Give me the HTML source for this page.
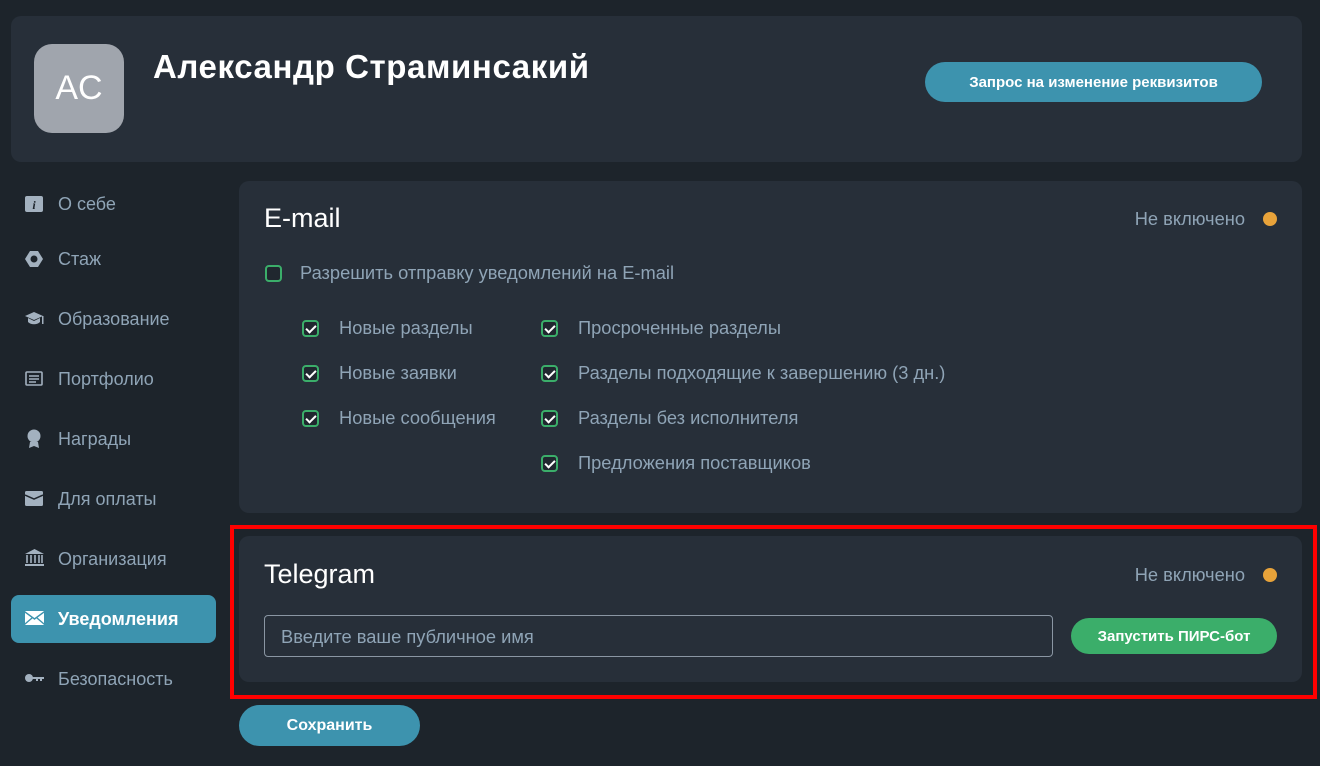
<!DOCTYPE html>
<html><head><meta charset="utf-8"><style>
*{box-sizing:border-box;margin:0;padding:0}
body{width:1320px;height:766px;background:#1d242b;font-family:"Liberation Sans",sans-serif;position:relative;overflow:hidden;color:#8fa4b6}
.abs{position:absolute}
.card{position:absolute;background:#272f39;border-radius:10px}
.btn{position:absolute;border-radius:21px;color:#fff;font-weight:bold;font-size:15px;display:flex;align-items:center;justify-content:center}
.nav{position:absolute;left:58px;font-size:18px;color:#8fa4b6;line-height:20px}
.ic{position:absolute;left:25px}
.cb{position:absolute;width:17px;height:17px;border:2px solid #3bae6a;border-radius:4px;background:#20272f}
.cb.on::after{content:"";position:absolute;left:4px;top:1px;width:4px;height:8px;border:solid #fff;border-width:0 2px 2px 0;transform:rotate(45deg)}
.lbl{position:absolute;font-size:18.3px;line-height:20px;color:#8fa4b6}
.dot{position:absolute;width:14px;height:14px;border-radius:50%;background:#e8a33a}
</style></head><body>
<div class="card" style="left:11px;top:16px;width:1291px;height:146px"></div>
<div class="abs" style="left:34px;top:44px;width:90px;height:89px;border-radius:18px;background:#a0a5ad;color:#fff;font-size:34px;display:flex;align-items:center;justify-content:center;font-weight:300">AC</div>
<div class="abs" style="left:153px;top:48px;font-size:33px;font-weight:bold;color:#fff;letter-spacing:0.6px">Александр Страминсакий</div>
<div class="btn" style="left:925px;top:62px;width:337px;height:40px;background:#3d93ae">Запрос на изменение реквизитов</div>

<div class="abs" style="left:11px;top:595px;width:205px;height:48px;border-radius:8px;background:#3d93ae"></div>
<svg class="ic" style="top:196px" width="18" height="16"><rect width="18" height="16" rx="2" fill="#a3b1bf"/><text x="9" y="13" font-size="12" font-style="italic" font-weight="bold" fill="#1d242b" text-anchor="middle" font-family="Liberation Serif">i</text></svg>
<div class="nav" style="top:194px">О себе</div>
<svg class="ic" style="top:251px" width="18" height="16"><polygon points="5,0 13,0 18,8 13,16 5,16 0,8" fill="#a3b1bf"/><circle cx="9" cy="8" r="3.5" fill="#1d242b"/></svg>
<div class="nav" style="top:249px">Стаж</div>
<svg class="ic" style="top:311px" width="20" height="16"><polygon points="9,1 18,5 9,9 0,5" fill="#a3b1bf"/><path d="M3,7v4c3,3 9,3 12,0v-4l-6,3z" fill="#a3b1bf"/><rect x="17" y="5" width="1.5" height="8" fill="#a3b1bf"/></svg>
<div class="nav" style="top:309px">Образование</div>
<svg class="ic" style="top:371px" width="18" height="15"><rect x="1" y="1" width="16" height="13" rx="1" fill="none" stroke="#a3b1bf" stroke-width="1.6"/><path d="M4,5h10M4,8h10M4,11h7" stroke="#a3b1bf" stroke-width="1.4"/></svg>
<div class="nav" style="top:369px">Портфолио</div>
<svg class="ic" style="top:429px" width="18" height="20"><circle cx="9" cy="7" r="6.5" fill="#a3b1bf"/><path d="M5,13l-1,6l5,-2l5,2l-1,-6z" fill="#a3b1bf"/></svg>
<div class="nav" style="top:429px">Награды</div>
<svg class="ic" style="top:491px" width="18" height="15"><rect y="0" width="18" height="15" rx="1.5" fill="#a3b1bf"/><path d="M0,4l9,4l9,-4" stroke="#1d242b" stroke-width="1.5" fill="none"/></svg>
<div class="nav" style="top:489px">Для оплаты</div>
<svg class="ic" style="top:549px" width="19" height="18"><polygon points="9.5,0 19,5 0,5" fill="#a3b1bf"/><path d="M2,6v8M6,6v8M10,6v8M14,6v8M17,6v8" stroke="#a3b1bf" stroke-width="1.6"/><rect y="15" width="19" height="2" fill="#a3b1bf"/></svg>
<div class="nav" style="top:549px">Организация</div>
<svg class="ic" style="top:611px" width="19" height="14"><rect width="19" height="14" rx="1" fill="#fff"/><path d="M0,1l9.5,7l9.5,-7M0,13l7,-6M19,13l-7,-6" stroke="#3d93ae" stroke-width="1.4" fill="none"/></svg>
<div class="nav" style="top:609px;color:#fff;font-weight:bold">Уведомления</div>
<svg class="ic" style="top:673px" width="20" height="10"><circle cx="4" cy="5" r="4" fill="#a3b1bf"/><path d="M7,4h12v2h-2v2h-2v-2h-2v2h-2v-2h-4z" fill="#a3b1bf"/></svg>
<div class="nav" style="top:669px">Безопасность</div>

<div class="card" style="left:239px;top:181px;width:1063px;height:332px"></div>
<div class="abs" style="left:264px;top:203px;font-size:27px;color:#fff">E-mail</div>
<div class="lbl" style="right:75px;top:209px">Не включено</div>
<div class="dot" style="left:1263px;top:212px"></div>
<div class="cb" style="left:265px;top:265px"></div>
<div class="lbl" style="left:300px;top:263px">Разрешить отправку уведомлений на E-mail</div>
<div class="cb on" style="left:302px;top:320px"></div><div class="lbl" style="left:339px;top:318px">Новые разделы</div>
<div class="cb on" style="left:302px;top:365px"></div><div class="lbl" style="left:339px;top:363px">Новые заявки</div>
<div class="cb on" style="left:302px;top:410px"></div><div class="lbl" style="left:339px;top:408px">Новые сообщения</div>
<div class="cb on" style="left:541px;top:320px"></div><div class="lbl" style="left:578px;top:318px">Просроченные разделы</div>
<div class="cb on" style="left:541px;top:365px"></div><div class="lbl" style="left:578px;top:363px">Разделы подходящие к завершению (3 дн.)</div>
<div class="cb on" style="left:541px;top:410px"></div><div class="lbl" style="left:578px;top:408px">Разделы без исполнителя</div>
<div class="cb on" style="left:541px;top:455px"></div><div class="lbl" style="left:578px;top:453px">Предложения поставщиков</div>

<div class="card" style="left:239px;top:536px;width:1063px;height:146px"></div>
<div class="abs" style="left:264px;top:559px;font-size:27px;color:#fff">Telegram</div>
<div class="lbl" style="right:75px;top:565px">Не включено</div>
<div class="dot" style="left:1263px;top:568px"></div>
<div class="abs" style="left:264px;top:615px;width:789px;height:42px;border:1px solid #8a96a3;border-radius:4px;font-size:18.3px;padding:10px 16px;color:#8fa4b6">Введите ваше публичное имя</div>
<div class="btn" style="left:1071px;top:618px;width:206px;height:36px;background:#3bae6a">Запустить ПИРС-бот</div>
<div class="abs" style="left:230px;top:525px;width:1087px;height:174px;border:4px solid #f00"></div>

<div class="btn" style="left:239px;top:705px;width:181px;height:41px;background:#3d93ae;font-size:16px">Сохранить</div>
</body></html>
